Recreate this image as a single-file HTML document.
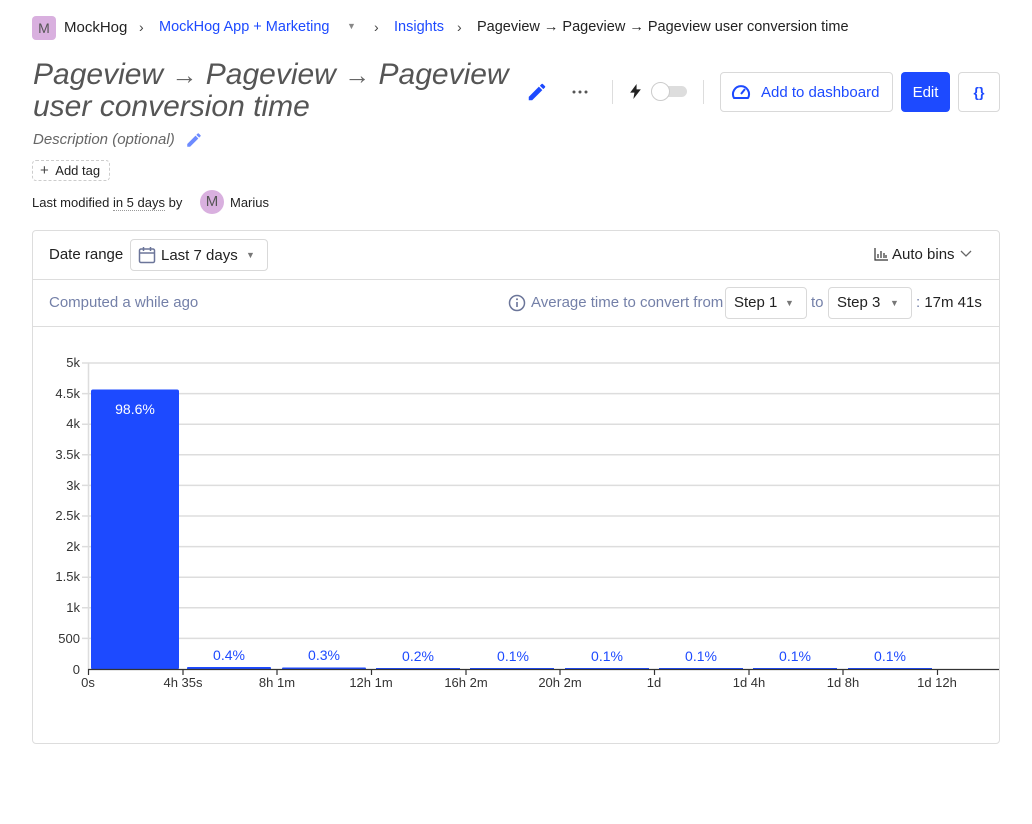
<!DOCTYPE html>
<html><head><meta charset="utf-8"><style>
*{box-sizing:border-box;margin:0;padding:0}
body{width:1032px;height:824px;background:#fff;font-family:"Liberation Sans",sans-serif;color:#333;position:relative;overflow:hidden}
.a{position:absolute;white-space:nowrap}
.blue{color:#1d4aff}
.btn{position:absolute;border:1px solid #d9d9d9;border-radius:4px;background:#fff}
</style></head><body>
<div class="a" style="left:32px;top:16px;width:24px;height:24px;background:#d9b0df;border-radius:4px;color:#555;font-size:14px;text-align:center;line-height:24px">M</div>
<div class="a" style="left:64px;top:19px;font-size:15px;color:#222">MockHog</div>
<div class="a" style="left:139px;top:19px;font-size:14px;color:#444">›</div>
<div class="a blue" style="left:159px;top:19px;font-size:14.5px">MockHog App + Marketing</div>
<div class="a" style="left:347px;top:21px;font-size:9px;color:#888">▼</div>
<div class="a" style="left:374px;top:19px;font-size:14px;color:#444">›</div>
<div class="a blue" style="left:394px;top:19px;font-size:14.5px">Insights</div>
<div class="a" style="left:457px;top:19px;font-size:14px;color:#444">›</div>
<div class="a" style="left:477px;top:19px;font-size:14.5px;color:#222">Pageview → Pageview → Pageview user conversion time</div>

<div class="a" style="left:33px;top:59px;font-size:30px;font-style:italic;color:#555;line-height:32px">Pageview <span style="font-style:normal;font-size:26px;color:#666">→</span> Pageview <span style="font-style:normal;font-size:26px;color:#666">→</span> Pageview<br>user conversion time</div>
<svg class="a" style="left:526px;top:81px" width="22" height="22" viewBox="0 0 24 24"><path d="M3 17.25V21h3.75L17.8 9.94l-3.75-3.75L3 17.25zM20.7 7.04a1 1 0 000-1.41l-2.34-2.34a1 1 0 00-1.41 0l-1.83 1.83 3.75 3.75 1.83-1.83z" fill="#1d4aff"/></svg>
<svg class="a" style="left:572px;top:90px" width="16" height="4"><circle cx="2" cy="2" r="1.5" fill="#555"/><circle cx="8" cy="2" r="1.5" fill="#555"/><circle cx="14" cy="2" r="1.5" fill="#555"/></svg>
<div class="a" style="left:612px;top:80px;width:1px;height:24px;background:#ddd"></div>
<svg class="a" style="left:629px;top:84px" width="13" height="15" viewBox="0 0 12 14"><path d="M7 0L1 8h4l-1 6 7-9H7z" fill="#222"/></svg>
<div class="a" style="left:651px;top:86px;width:36px;height:11px;background:#ddd;border-radius:6px"></div>
<div class="a" style="left:651px;top:82px;width:19px;height:19px;background:#fff;border:1px solid #ccc;border-radius:50%"></div>
<div class="a" style="left:703px;top:80px;width:1px;height:24px;background:#ddd"></div>
<div class="btn" style="left:720px;top:72px;width:173px;height:40px"></div>
<svg class="a" style="left:731px;top:83px" width="20" height="18" viewBox="0 0 20 18"><path d="M3 15A8 8 0 1 1 17 15Z" fill="none" stroke="#1d4aff" stroke-width="2" stroke-linejoin="round"/><path d="M10 11L14 6" stroke="#1d4aff" stroke-width="2"/></svg>
<div class="a blue" style="left:761px;top:84px;font-size:15px">Add to dashboard</div>
<div class="a" style="left:901px;top:72px;width:49px;height:40px;background:#1d4aff;border-radius:4px;color:#fff;font-size:15px;text-align:center;line-height:41px">Edit</div>
<div class="btn" style="left:958px;top:72px;width:42px;height:40px;color:#1d4aff;font-size:14px;font-weight:bold;text-align:center;line-height:38px">{}</div>

<div class="a" style="left:33px;top:131px;font-size:15px;font-style:italic;color:#666">Description (optional)</div>
<svg class="a" style="left:185px;top:131px" width="18" height="18" viewBox="0 0 24 24"><path d="M3 17.25V21h3.75L17.8 9.94l-3.75-3.75L3 17.25zM20.7 7.04a1 1 0 000-1.41l-2.34-2.34a1 1 0 00-1.41 0l-1.83 1.83 3.75 3.75 1.83-1.83z" fill="#6d8bff"/></svg>
<div class="a" style="left:32px;top:160px;width:78px;height:21px;border:1px dashed #ccc;border-radius:4px;font-size:13px;color:#222;line-height:19px;padding-left:7px"><span style="font-size:15px;color:#444">+</span>&nbsp; Add tag</div>
<div class="a" style="left:32px;top:195px;font-size:13px;color:#222">Last modified <span style="border-bottom:1px dotted #999">in 5 days</span> by</div>
<div class="a" style="left:200px;top:190px;width:24px;height:24px;background:#d9b0df;border-radius:50%;text-align:center;line-height:24px;font-size:15px;color:#555">M</div>
<div class="a" style="left:230px;top:195px;font-size:13px;color:#222">Marius</div>

<div class="a" style="left:32px;top:230px;width:968px;height:514px;border:1px solid #ddd;border-radius:4px"></div>
<div class="a" style="left:33px;top:279px;width:966px;height:1px;background:#ddd"></div>
<div class="a" style="left:33px;top:326px;width:966px;height:1px;background:#ddd"></div>
<div class="a" style="left:49px;top:246px;font-size:15px;color:#222">Date range</div>
<div class="btn" style="left:130px;top:239px;width:138px;height:32px"></div>
<svg class="a" style="left:138px;top:246px" width="18" height="18" viewBox="0 0 18 18"><rect x="1.5" y="3" width="15" height="13.5" rx="1.5" fill="none" stroke="#6b7599" stroke-width="1.5"/><path d="M1.5 7h15M5.5 1v4M12.5 1v4" stroke="#6b7599" stroke-width="1.5"/></svg>
<div class="a" style="left:161px;top:247px;font-size:15px;color:#222">Last 7 days</div>
<div class="a" style="left:246px;top:250px;font-size:9px;color:#777">▼</div>
<svg class="a" style="left:874px;top:248px" width="14" height="13" viewBox="0 0 14 13"><path d="M1 0v12h13M4 10V6M7 10V3M10 10V5M12 10V7" stroke="#333" stroke-width="1.2" fill="none"/></svg>
<div class="a" style="left:892px;top:246px;font-size:15px;color:#222">Auto bins</div>
<svg class="a" style="left:960px;top:250px" width="12" height="8" viewBox="0 0 12 8"><path d="M1 1l5 5 5-5" stroke="#666" fill="none" stroke-width="1.3"/></svg>

<div class="a" style="left:49px;top:294px;font-size:15px;color:#7480a8">Computed a while ago</div>
<svg class="a" style="left:508px;top:294px" width="18" height="18" viewBox="0 0 18 18"><circle cx="9" cy="9" r="7.5" fill="none" stroke="#6b7599" stroke-width="1.5"/><path d="M9 8v5" stroke="#6b7599" stroke-width="1.6"/><circle cx="9" cy="5.3" r="1" fill="#6b7599"/></svg>
<div class="a" style="left:531px;top:294px;font-size:15px;color:#7480a8">Average time to convert from</div>
<div class="btn" style="left:725px;top:287px;width:82px;height:32px"></div>
<div class="a" style="left:734px;top:294px;font-size:15px;color:#222">Step 1</div>
<div class="a" style="left:785px;top:298px;font-size:9px;color:#777">▼</div>
<div class="a" style="left:811px;top:294px;font-size:15px;color:#7480a8">to</div>
<div class="btn" style="left:828px;top:287px;width:84px;height:32px"></div>
<div class="a" style="left:837px;top:294px;font-size:15px;color:#222">Step 3</div>
<div class="a" style="left:890px;top:298px;font-size:9px;color:#777">▼</div>
<div class="a" style="left:916px;top:294px;font-size:15px;color:#222"><span style="color:#7480a8">:</span> 17m 41s</div>

<svg class="a" style="left:0;top:0" width="1032" height="824" font-family="Liberation Sans, sans-serif" font-size="13">
<g stroke="#ddd" stroke-width="1.5">
<line x1="82" x2="999" y1="363" y2="363"/><line x1="82" x2="999" y1="393.6" y2="393.6"/><line x1="82" x2="999" y1="424.2" y2="424.2"/><line x1="82" x2="999" y1="454.8" y2="454.8"/><line x1="82" x2="999" y1="485.4" y2="485.4"/><line x1="82" x2="999" y1="516" y2="516"/><line x1="82" x2="999" y1="546.6" y2="546.6"/><line x1="82" x2="999" y1="577.2" y2="577.2"/><line x1="82" x2="999" y1="607.8" y2="607.8"/><line x1="82" x2="999" y1="638.4" y2="638.4"/>
<line x1="88.5" x2="88.5" y1="363" y2="669"/>
</g>
<g fill="#333" text-anchor="end">
<text x="80" y="367">5k</text><text x="80" y="398">4.5k</text><text x="80" y="428">4k</text><text x="80" y="459">3.5k</text><text x="80" y="490">3k</text><text x="80" y="520">2.5k</text><text x="80" y="551">2k</text><text x="80" y="581">1.5k</text><text x="80" y="612">1k</text><text x="80" y="643">500</text><text x="80" y="674">0</text>
</g>
<rect x="91" y="389.5" width="88" height="280" rx="2" fill="#1d4aff"/>
<g fill="#1d4aff">
<rect x="187" y="667" width="84" height="2.5" rx="1"/><rect x="282" y="667.5" width="84" height="2" rx="1"/><rect x="376" y="668" width="84" height="1.5"/><rect x="470" y="668" width="84" height="1.5"/><rect x="565" y="668" width="84" height="1.5"/><rect x="659" y="668" width="84" height="1.5"/><rect x="753" y="668" width="84" height="1.5"/><rect x="848" y="668" width="84" height="1.5"/>
</g>
<line x1="88" x2="999" y1="669.5" y2="669.5" stroke="#333" stroke-width="1.2"/>
<g stroke="#333" stroke-width="1.2">
<line x1="88.5" x2="88.5" y1="669" y2="675"/><line x1="183" x2="183" y1="669" y2="675"/><line x1="277" x2="277" y1="669" y2="675"/><line x1="371.5" x2="371.5" y1="669" y2="675"/><line x1="466" x2="466" y1="669" y2="675"/><line x1="560" x2="560" y1="669" y2="675"/><line x1="654.5" x2="654.5" y1="669" y2="675"/><line x1="749" x2="749" y1="669" y2="675"/><line x1="843" x2="843" y1="669" y2="675"/><line x1="937.5" x2="937.5" y1="669" y2="675"/>
</g>
<g fill="#333" text-anchor="middle">
<text x="88" y="687">0s</text><text x="183" y="687">4h 35s</text><text x="277" y="687">8h 1m</text><text x="371" y="687">12h 1m</text><text x="466" y="687">16h 2m</text><text x="560" y="687">20h 2m</text><text x="654" y="687">1d</text><text x="749" y="687">1d 4h</text><text x="843" y="687">1d 8h</text><text x="937" y="687">1d 12h</text>
</g>
<text x="135" y="414" fill="#fff" text-anchor="middle" font-size="14">98.6%</text>
<g fill="#1d4aff" text-anchor="middle" font-size="14">
<text x="229" y="660">0.4%</text><text x="324" y="660">0.3%</text><text x="418" y="661">0.2%</text><text x="513" y="661">0.1%</text><text x="607" y="661">0.1%</text><text x="701" y="661">0.1%</text><text x="795" y="661">0.1%</text><text x="890" y="661">0.1%</text>
</g>
</svg>
</body></html>
